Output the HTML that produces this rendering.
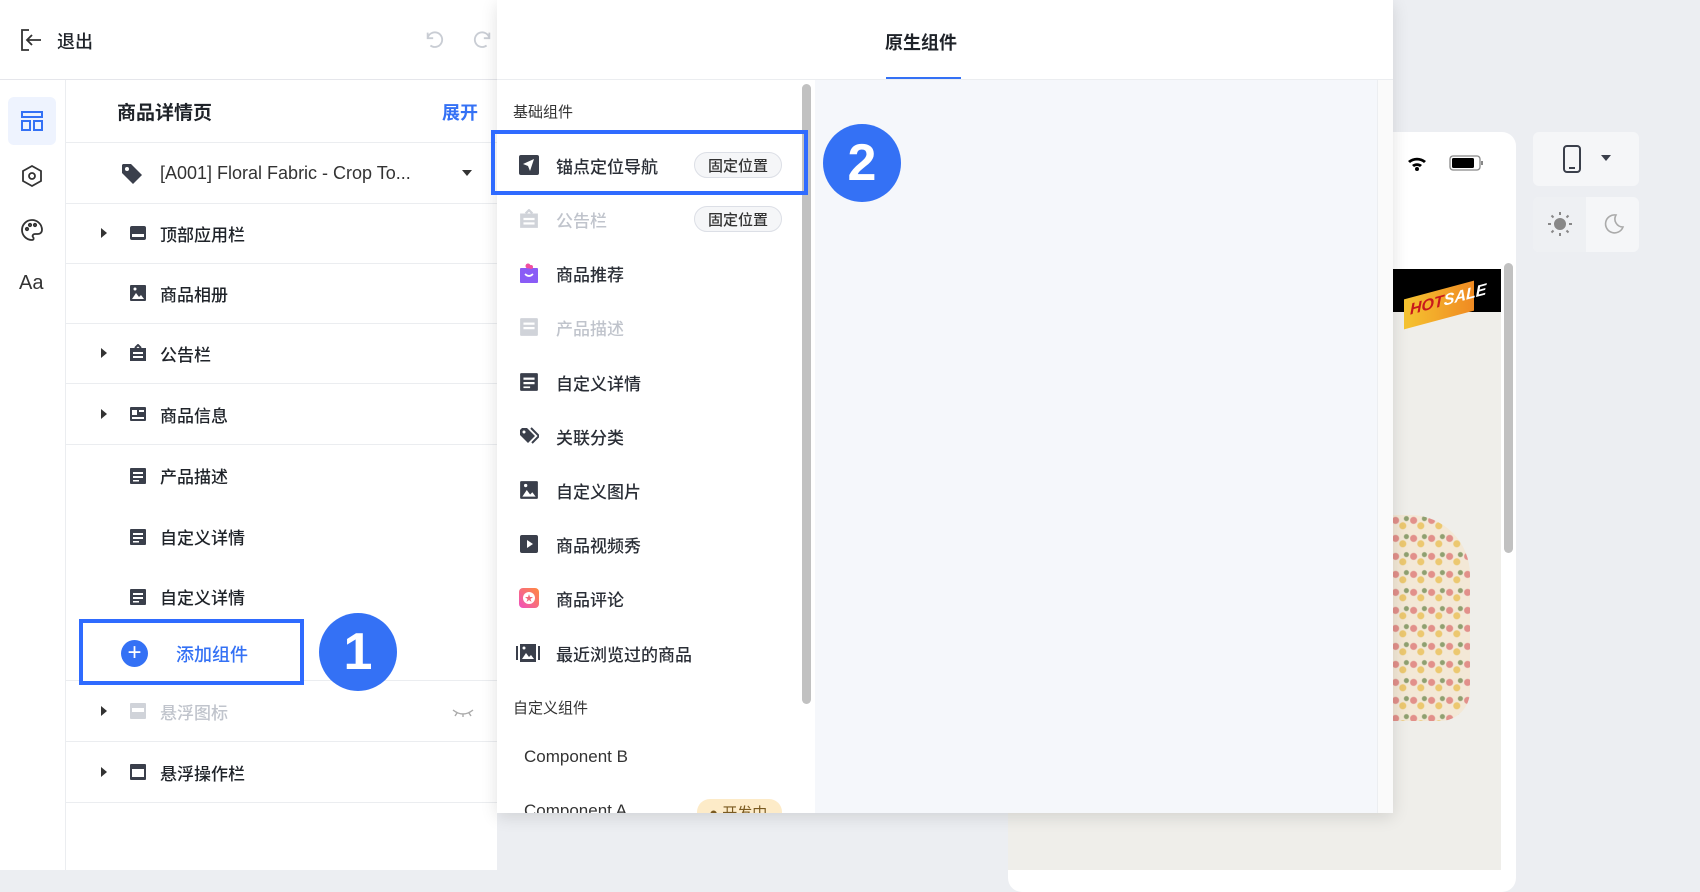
<!DOCTYPE html>
<html><head><meta charset="utf-8"><style>
*{box-sizing:border-box;margin:0;padding:0}
body{width:1700px;height:870px;overflow:hidden;background:#eceef2;font-family:"Liberation Sans","Noto Sans CJK SC",sans-serif;color:#1f2329;position:relative}
.abs{position:absolute}
.row{position:absolute;left:66px;width:431px;height:61px;border-bottom:1px solid #ebedf0;display:flex;align-items:center;font-size:17px;font-weight:500}
.arr{position:absolute;left:35px;width:0;height:0;border-left:6px solid #333;border-top:5px solid transparent;border-bottom:5px solid transparent}
.ic{position:absolute;left:63px;width:18px;height:18px}
.txt{position:absolute;left:94px}
.it{position:absolute;left:497px;width:303px;height:54px;display:flex;align-items:center;font-size:17px;font-weight:500;color:#2a2e36}
.it .i{position:absolute;left:22px;width:20px;height:20px}
.it .t{position:absolute;left:59px}
.badge{position:absolute;left:197px;height:26px;width:88px;border:1px solid #dcdfe6;border-radius:13px;background:#f5f6f8;font-size:15px;display:flex;align-items:center;justify-content:center;color:#333}
.circ{position:absolute;width:78px;height:78px;border-radius:50%;background:#3471f5;color:#fff;font-size:52px;font-weight:bold;display:flex;align-items:center;justify-content:center;font-family:"Liberation Sans",sans-serif}
</style></head><body>
<div class="abs" style="left:0;top:0;width:497px;height:80px;background:#fff;border-bottom:1px solid #e5e6eb"></div>
<svg class="abs" style="left:20px;top:28px" width="24" height="24" viewBox="0 0 24 24" fill="none" stroke="#333" stroke-width="1.8"><path d="M9 2H2v20h7M8 12h13M12 7l-5 5 5 5"/></svg>
<div class="abs" style="left:57px;top:28px;font-size:18px;font-weight:500">退出</div>
<svg class="abs" style="left:424px;top:29px" width="22" height="22" viewBox="0 0 24 24" fill="none" stroke="#c9cdd4" stroke-width="2"><path d="M4 4v6h6M4 10a8 8 0 1 1 3 8"/></svg>
<svg class="abs" style="left:471px;top:29px" width="22" height="22" viewBox="0 0 24 24" fill="none" stroke="#c9cdd4" stroke-width="2"><path d="M20 4v6h-6M20 10a8 8 0 1 0-3 8"/></svg>
<div class="abs" style="left:0;top:80px;width:66px;height:790px;background:#fff;border-right:1px solid #ebedf0"></div>
<div class="abs" style="left:8px;top:97px;width:48px;height:48px;background:#eef3fe;border-radius:6px"></div>
<svg class="abs" style="left:20px;top:109px" width="24" height="24" viewBox="0 0 24 24" fill="none" stroke="#3471f5" stroke-width="2"><rect x="2" y="3" width="20" height="5"/><rect x="2" y="12" width="8" height="9"/><rect x="14" y="12" width="8" height="9"/></svg>
<svg class="abs" style="left:20px;top:164px" width="24" height="24" viewBox="0 0 24 24" fill="none" stroke="#333" stroke-width="1.8"><path d="M12 2l9 5v10l-9 5-9-5V7z"/><circle cx="12" cy="12" r="3"/></svg>
<svg class="abs" style="left:20px;top:218px" width="24" height="24" viewBox="0 0 24 24" fill="none" stroke="#333" stroke-width="1.8"><path d="M12 2a10 10 0 0 0 0 20c2 0 2-2 1-3s0-3 2-3h3a4 4 0 0 0 4-4c0-6-5-10-10-10z"/><circle cx="7" cy="11" r="1.2"/><circle cx="10" cy="7" r="1.2"/><circle cx="15" cy="7" r="1.2"/></svg>
<div class="abs" style="left:19px;top:272px;font-size:20px;color:#333">Aa</div>
<div class="abs" style="left:66px;top:80px;width:431px;height:790px;background:#fff"></div>
<div class="row" style="top:81px;height:62px"><span style="position:absolute;left:51px;font-size:19px;font-weight:bold">商品详情页</span><span style="position:absolute;left:376px;color:#3471f5;font-size:18px;font-weight:bold">展开</span></div>
<div class="row" style="top:143px"><svg class="abs" style="left:54px;top:19px" width="24" height="24" viewBox="0 0 24 24"><path d="M2 3v8l11 11 9-9L11 2H3z" fill="#3a3f4b"/><circle cx="7" cy="7" r="2" fill="#fff"/></svg><span class="txt" style="font-size:18px;color:#333;font-weight:normal">[A001] Floral Fabric - Crop To...</span><span class="abs" style="left:396px;top:27px;border-top:6px solid #333;border-left:5px solid transparent;border-right:5px solid transparent"></span></div>
<div class="row" style="top:203px"><span class="arr"></span><svg class="ic" viewBox="0 0 18 18"><rect x="1" y="2" width="16" height="14" rx="2" fill="#3a3f4b"/><rect x="3" y="10" width="12" height="3" fill="#fff"/></svg><span class="txt">顶部应用栏</span></div>
<div class="row" style="top:263px"><svg class="ic" viewBox="0 0 18 18"><rect x="1" y="1" width="16" height="16" rx="1" fill="#3a3f4b"/><path d="M3 15l4-6 3 4 2-2 3 4z" fill="#fff"/><circle cx="6" cy="5" r="1.5" fill="#fff"/></svg><span class="txt">商品相册</span></div>
<div class="row" style="top:323px"><span class="arr"></span><svg class="ic" viewBox="0 0 18 18"><path d="M1 4h16v13H1z" fill="#3a3f4b"/><path d="M6 4l3-3 3 3" stroke="#3a3f4b" fill="none" stroke-width="2"/><rect x="4" y="8" width="10" height="2" fill="#fff"/><rect x="4" y="12" width="10" height="2" fill="#fff"/></svg><span class="txt">公告栏</span></div>
<div class="row" style="top:384px"><span class="arr"></span><svg class="ic" viewBox="0 0 18 18"><rect x="1" y="2" width="16" height="14" rx="1" fill="#3a3f4b"/><rect x="3" y="5" width="5" height="5" fill="#fff"/><rect x="10" y="5" width="5" height="2" fill="#fff"/><rect x="3" y="12" width="12" height="2" fill="#fff"/></svg><span class="txt">商品信息</span></div>
<div class="row" style="top:445px;border:0"><svg class="ic" viewBox="0 0 18 18"><rect x="1" y="1" width="16" height="16" rx="1" fill="#3a3f4b"/><rect x="4" y="5" width="10" height="2" fill="#fff"/><rect x="4" y="9" width="10" height="2" fill="#fff"/><rect x="4" y="13" width="6" height="1.5" fill="#fff"/></svg><span class="txt">产品描述</span></div>
<div class="row" style="top:506px;border:0"><svg class="ic" viewBox="0 0 18 18"><rect x="1" y="1" width="16" height="16" rx="1" fill="#3a3f4b"/><rect x="4" y="5" width="10" height="2" fill="#fff"/><rect x="4" y="9" width="10" height="2" fill="#fff"/><rect x="4" y="13" width="6" height="1.5" fill="#fff"/></svg><span class="txt">自定义详情</span></div>
<div class="row" style="top:566px;border:0"><svg class="ic" viewBox="0 0 18 18"><rect x="1" y="1" width="16" height="16" rx="1" fill="#3a3f4b"/><rect x="4" y="5" width="10" height="2" fill="#fff"/><rect x="4" y="9" width="10" height="2" fill="#fff"/><rect x="4" y="13" width="6" height="1.5" fill="#fff"/></svg><span class="txt">自定义详情</span></div>
<div class="row" style="top:620px;height:61px"></div>
<div class="abs" style="left:79px;top:619px;width:225px;height:66px;border:4px solid #2f6bff;background:#fff"></div>
<div class="abs" style="left:121px;top:640px;width:27px;height:27px;border-radius:50%;background:#3471f5;color:#fff;font-size:24px;line-height:26px;text-align:center">+</div>
<div class="abs" style="left:176px;top:641px;font-size:18px;color:#3471f5;font-weight:500">添加组件</div>
<div class="circ" style="left:319px;top:613px">1</div>
<div class="row" style="top:681px;color:#c0c4cc"><span class="arr"></span><svg class="ic" viewBox="0 0 18 18"><rect x="1" y="1" width="16" height="16" rx="1" fill="#d0d3d9"/><rect x="3" y="6" width="12" height="4" fill="#fff"/></svg><span class="txt">悬浮图标</span><svg class="abs" style="left:386px;top:27px" width="22" height="10" viewBox="0 0 22 10" fill="none" stroke="#aaa" stroke-width="1.4"><path d="M1 2q10 8 20 0M5 5l-2 3M11 6v3M17 5l2 3"/></svg></div>
<div class="row" style="top:742px"><span class="arr"></span><svg class="ic" viewBox="0 0 18 18"><rect x="1" y="1" width="16" height="16" rx="1" fill="#3a3f4b"/><rect x="3" y="6" width="12" height="8" fill="#fff"/></svg><span class="txt">悬浮操作栏</span></div>
<div class="abs" style="left:1008px;top:132px;width:508px;height:760px;background:#fff;border-radius:14px"></div>
<svg class="abs" style="left:1384px;top:153px" width="100" height="20" viewBox="0 0 100 20"><rect x="0" y="6" width="3" height="10" fill="#000"/><rect x="5" y="3" width="3" height="13" fill="#000"/><path d="M24 8a14 14 0 0 1 18 0l-2 2a11 11 0 0 0-14 0zM28 12a8 8 0 0 1 10 0l-2 2a5 5 0 0 0-6 0z" fill="#000"/><circle cx="33" cy="16" r="2" fill="#000"/><rect x="66" y="3" width="30" height="14" rx="3" fill="none" stroke="#888" stroke-width="1.3"/><rect x="68" y="5" width="22" height="10" rx="1.5" fill="#000"/><rect x="97" y="8" width="2" height="4" fill="#888"/></svg>
<div class="abs" style="left:1008px;top:269px;width:493px;height:601px;background:#efeeea"></div>
<div class="abs" style="left:1008px;top:269px;width:493px;height:43px;background:#000"></div>
<div class="abs" style="left:1404px;top:290px;width:70px;height:30px;background:linear-gradient(90deg,#f5c431,#f08a22);transform:skewY(-15deg);font:italic bold 16px 'Liberation Sans',sans-serif;color:#c8191c;padding:4px 0 0 6px">HOT<span style="color:#fff">SALE</span></div>
<div class="abs" style="left:1392px;top:515px;width:78px;height:206px;background:radial-gradient(circle at 20% 30%,#e2908a 3px,transparent 4px),radial-gradient(circle at 60% 60%,#ecc870 3px,transparent 4px),radial-gradient(circle at 80% 20%,#8fa070 2px,transparent 3px),#f3e8d6;background-size:18px 18px;border-radius:0 60px 30px 0"></div>
<div class="abs" style="left:1504px;top:263px;width:9px;height:290px;background:#c1c1c1;border-radius:5px"></div>
<div class="abs" style="left:1533px;top:132px;width:106px;height:54px;background:#f5f6f8;border-radius:6px"></div>
<svg class="abs" style="left:1562px;top:145px" width="20" height="28" viewBox="0 0 20 28"><rect x="2" y="1" width="16" height="26" rx="3" fill="none" stroke="#3a3f4b" stroke-width="2"/><rect x="7" y="22" width="6" height="2" fill="#3a3f4b"/></svg>
<div class="abs" style="left:1601px;top:155px;border-top:6px solid #3a3f4b;border-left:5px solid transparent;border-right:5px solid transparent"></div>
<div class="abs" style="left:1533px;top:197px;width:106px;height:55px;background:#f5f6f8;border-radius:6px"></div>
<div class="abs" style="left:1533px;top:197px;width:53px;height:55px;background:#eef0f3;border-radius:6px 0 0 6px"></div>
<svg class="abs" style="left:1547px;top:211px" width="26" height="26" viewBox="0 0 26 26" stroke="#888" stroke-width="2"><circle cx="13" cy="13" r="5" fill="#888"/><path d="M13 1v3M13 22v3M1 13h3M22 13h3M4.5 4.5l2 2M19.5 19.5l2 2M4.5 21.5l2-2M19.5 6.5l2-2"/></svg>
<svg class="abs" style="left:1601px;top:212px" width="24" height="24" viewBox="0 0 24 24" fill="none" stroke="#aaa" stroke-width="1.6"><path d="M15 3a9 9 0 1 0 7 12A8 8 0 0 1 15 3z"/></svg>
<div class="abs" style="left:497px;top:0;width:896px;height:813px;background:#fff;box-shadow:0 4px 16px rgba(0,0,0,.12)"></div>
<div class="abs" style="left:497px;top:79px;width:896px;height:1px;background:#ebedf0"></div>
<div class="abs" style="left:885px;top:29px;font-size:18px;font-weight:bold">原生组件</div>
<div class="abs" style="left:886px;top:77px;width:75px;height:2px;background:#3471f5"></div>
<div class="abs" style="left:802px;top:84px;width:9px;height:620px;background:#c1c1c1;border-radius:5px"></div>
<div class="abs" style="left:815px;top:80px;width:562px;height:733px;background:#f5f7fb"></div>
<div class="abs" style="left:1377px;top:80px;width:16px;height:733px;background:#fafafa;border-left:1px solid #eceef1"></div>
<div class="abs" style="left:513px;top:101px;font-size:15px;color:#333">基础组件</div>
<div class="it" style="top:138px"><svg class="i" viewBox="0 0 20 20"><rect width="20" height="20" rx="2" fill="#3a3f4b"/><path d="M15 4L4 9l5 2 2 5z" fill="#fff"/></svg><span class="t">锚点定位导航</span><span class="badge">固定位置</span></div>
<div class="abs" style="left:491px;top:130px;width:317px;height:65px;border:4px solid #2f6bff"></div>
<div class="circ" style="left:823px;top:124px">2</div>
<div class="it" style="top:192px;color:#c0c4cc"><svg class="i" viewBox="0 0 18 18"><path d="M1 4h16v13H1z" fill="#d0d3d9"/><path d="M6 4l3-3 3 3" stroke="#d0d3d9" fill="none" stroke-width="2"/><rect x="4" y="8" width="10" height="2" fill="#fff"/><rect x="4" y="12" width="10" height="2" fill="#fff"/></svg><span class="t">公告栏</span><span class="badge">固定位置</span></div>
<div class="it" style="top:246px"><svg class="i" viewBox="0 0 20 20"><rect x="1" y="5" width="18" height="15" rx="1" fill="#8a5cf6"/><path d="M6 11q4 4 8 0" stroke="#fff" fill="none" stroke-width="1.6"/><circle cx="9" cy="3" r="2.5" fill="#f04fa0"/><circle cx="12" cy="4" r="2" fill="#f04fa0"/></svg><span class="t">商品推荐</span></div>
<div class="it" style="top:300px;color:#c0c4cc"><svg class="i" viewBox="0 0 18 18"><rect x="1" y="1" width="16" height="16" rx="1" fill="#d0d3d9"/><rect x="4" y="5" width="10" height="2" fill="#fff"/><rect x="4" y="9" width="10" height="2" fill="#fff"/></svg><span class="t">产品描述</span></div>
<div class="it" style="top:355px"><svg class="i" viewBox="0 0 18 18"><rect x="1" y="1" width="16" height="16" rx="1" fill="#3a3f4b"/><rect x="4" y="5" width="10" height="2" fill="#fff"/><rect x="4" y="9" width="10" height="2" fill="#fff"/><rect x="4" y="13" width="6" height="1.5" fill="#fff"/></svg><span class="t">自定义详情</span></div>
<div class="it" style="top:409px"><svg class="i" viewBox="0 0 20 20"><path d="M1 4v5l8 8 7-7-8-8H3z" fill="#3a3f4b"/><path d="M12 2l8 8-7 7" stroke="#3a3f4b" stroke-width="2" fill="none"/><circle cx="5" cy="6" r="1.5" fill="#fff"/></svg><span class="t">关联分类</span></div>
<div class="it" style="top:463px"><svg class="i" viewBox="0 0 18 18"><rect x="1" y="1" width="16" height="16" rx="1" fill="#3a3f4b"/><path d="M3 15l4-6 3 4 2-2 3 4z" fill="#fff"/><circle cx="6" cy="5" r="1.5" fill="#fff"/></svg><span class="t">自定义图片</span></div>
<div class="it" style="top:517px"><svg class="i" viewBox="0 0 20 20"><rect x="1" y="1" width="18" height="18" rx="2" fill="#3a3f4b"/><path d="M8 6v8l6-4z" fill="#fff"/></svg><span class="t">商品视频秀</span></div>
<div class="it" style="top:571px"><svg class="i" viewBox="0 0 20 20"><defs><linearGradient id="g" x1="0" y1="1" x2="1" y2="0"><stop offset="0" stop-color="#f04fc0"/><stop offset="1" stop-color="#ff8a3d"/></linearGradient></defs><rect width="20" height="20" rx="4" fill="url(#g)"/><circle cx="10" cy="10" r="6" fill="#fff"/><path d="M10 6l1 3h3l-2.5 2 1 3-2.5-2-2.5 2 1-3L6 9h3z" fill="#f06a7a"/></svg><span class="t">商品评论</span></div>
<div class="it" style="top:626px"><svg class="i" style="left:19px;width:24px" viewBox="0 0 24 20"><rect x="0" y="3" width="2" height="14" fill="#3a3f4b"/><rect x="22" y="3" width="2" height="14" fill="#3a3f4b"/><rect x="4" y="1" width="16" height="18" fill="#3a3f4b"/><path d="M6 16l4-6 3 4 2-2 3 4z" fill="#fff"/><circle cx="8" cy="5" r="1.5" fill="#fff"/></svg><span class="t">最近浏览过的商品</span></div>
<div class="abs" style="left:513px;top:697px;font-size:15px;color:#333">自定义组件</div>
<div class="abs" style="left:524px;top:747px;font-size:17px;color:#333">Component B</div>
<div class="abs" style="left:497px;top:795px;width:303px;height:18px;overflow:hidden"><div style="position:absolute;left:27px;top:6px;font-size:17px;color:#333">Component A</div><div style="position:absolute;left:200px;top:4px;width:85px;height:26px;border-radius:13px;background:#fdebc8;font-size:15px;color:#7a5a20;padding:3px 0 0 12px">● 开发中</div></div>
</body></html>
